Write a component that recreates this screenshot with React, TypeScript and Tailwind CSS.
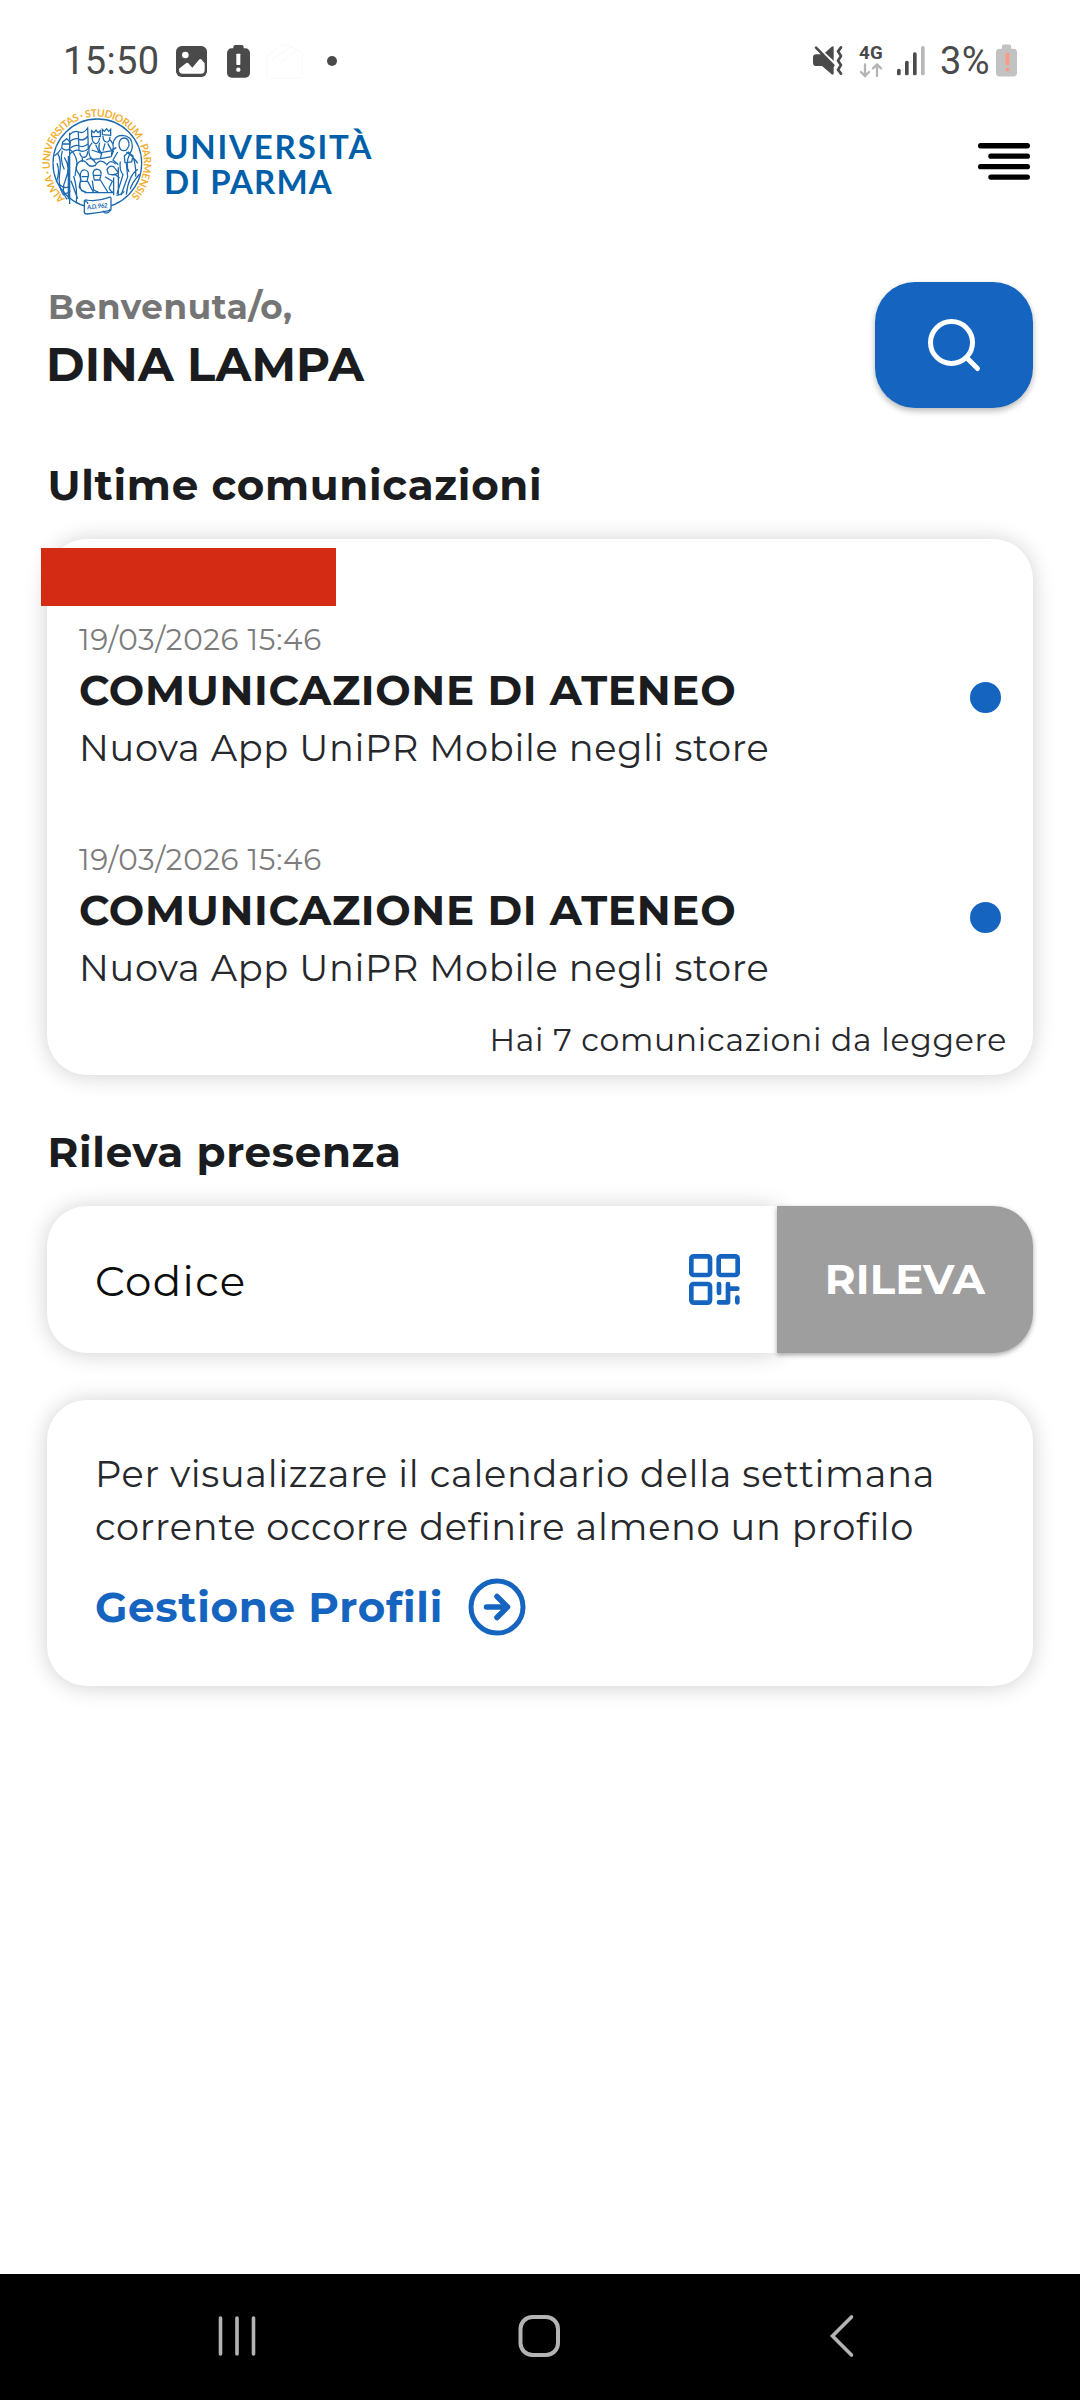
import type { ReactNode } from 'react';

const comunicazioni = [
  { id: 1, date: '19/03/2026 15:46', title: 'COMUNICAZIONE DI ATENEO', text: 'Nuova App UniPR Mobile negli store' },
  { id: 2, date: '19/03/2026 15:46', title: 'COMUNICAZIONE DI ATENEO', text: 'Nuova App UniPR Mobile negli store' },
];

function StatusBar() {
  return (
    <div className="flex h-[100px] shrink-0 items-center justify-between pt-[22px] pr-[63px] pl-[63px] font-[Roboto,sans-serif] text-[38px] leading-none text-[#4a4a4a]">
      <div className="flex items-center">
        <span className="w-[95px] pb-px tracking-[0.4px]">15:50</span>
        <svg className="ml-[18px] h-9 w-[31px]" viewBox="438 69 93 108">
          <rect x="438" y="78" width="93" height="93" rx="17" fill="currentColor" />
          <circle cx="466" cy="105" r="10" fill="#fff" />
          <path d="M447 146l22-17q3-2 6 1l12 13 20-24q4-4 8 0l9 11v20q0 11-11 11h-55q-11 0-11-11z" fill="#fff" />
        </svg>
        <svg className="ml-5 h-9 w-[23px]" viewBox="591 69 69 108">
          <rect x="610" y="75" width="31" height="20" rx="6" fill="currentColor" />
          <rect x="591" y="85" width="69" height="88" rx="14" fill="currentColor" />
          <rect x="619" y="101" width="12" height="34" rx="2" fill="#fff" />
          <circle cx="625" cy="149" r="6.5" fill="#fff" />
        </svg>
        <svg className="ml-4 h-9 w-[37px]" viewBox="708 69 111 108" fill="none" stroke="#eff4fb" strokeWidth="2">
          <path d="M710 108l47-33q8-4 17 0l36 20q8 5 8 13v50q0 17-17 17h-74q-17 0-17-17z" />
          <path d="M726 118l58-38M756 124l44-32" />
        </svg>
        <span className="ml-6 size-2.5 rounded-full bg-[#4a4a4a]" />
      </div>

      <div className="flex items-center">
        <svg className="h-9 w-[31px]" viewBox="96 69 93 108">
          <path d="M99 113q0-10 10-10h17l35 35v22q0 7-6 3l-29-25h-17q-10 0-10-10z" fill="currentColor" />
          <path d="M161 83v39l-26-24 19-17q7-5 7 2z" fill="currentColor" />
          <path d="M108 83l52 53" stroke="currentColor" strokeWidth="8" strokeLinecap="round" />
          <path
            d="M183 82l-9 12 9 14-9 14 9 13-9 14 9 12"
            fill="none"
            stroke="currentColor"
            strokeWidth="8"
            strokeLinecap="round"
            strokeLinejoin="round"
          />
        </svg>
        <svg className="ml-[15px] h-9 w-[26px]" viewBox="235 69 78 108">
          <text x="238" y="118" fontSize="56" fontWeight="700" fill="currentColor" textLength="72">
            4G
          </text>
          <path
            d="M256 133v34M244 156l12 12 12-12M292 168v-34M280 145l12-12 12 12"
            fill="none"
            stroke="#b4b4b4"
            strokeWidth="7"
            strokeLinecap="round"
          />
        </svg>
        <svg className="ml-[13px] h-9 w-7" viewBox="352 69 84 108" fill="currentColor">
          <rect x="352" y="146" width="11" height="20" rx="5" />
          <rect x="376" y="122" width="11" height="44" rx="5" />
          <rect x="400" y="97" width="11" height="69" rx="5" />
          <rect x="424" y="78" width="11" height="88" rx="5" fill="#b9b9b9" />
        </svg>
        <span className="ml-[15px] w-[51px] pb-px tracking-[0.5px]">3%</span>
        <svg className="ml-[5px] h-9 w-[21px]" viewBox="648 69 64 108" fill="#c2c2c2">
          <rect x="666" y="73" width="28" height="20" rx="5" />
          <rect x="648" y="86" width="64" height="84" rx="11" />
          <rect x="677" y="98" width="12" height="38" rx="3" fill="#f89c86" />
          <circle cx="683" cy="149" r="6.5" fill="#f89c86" />
        </svg>
      </div>
    </div>
  );
}

function Seal() {
  return (
    <svg className="mt-1 h-[114px] w-[118px]" viewBox="0 0 354 342" fill="none" stroke="#1a68ae" strokeWidth="3.800">
      <path id="motto" d="M79 284A141 141 0 1 1 272 280" stroke="none" />
      <text fontFamily="Lato, sans-serif" fontSize="31" fontWeight="700" fill="#f2ae30" stroke="none">
        <textPath href="#motto" textLength="668">
          ALMA · UNIVERSITAS · STUDIORUM · PARMENSIS
        </textPath>
      </text>
      <circle cx="175" cy="178" r="133" />
      {/* left figure, mitre and cloak */}
      <path d="M68 132l3-18 12-10 11 11-3 20q-9 8-23-3zM68 120h24M66 134q-6 12-20 22M56 148q12 20 6 60t12 66M70 140q-8 30 6 56M92 136q18 12 22 40l-6 40M76 160q20 30 4 66t4 60M54 178q10 24-2 56M88 156v130" />
      <path d="M92 86v214M62 242q16 14 26 6M96 230l20 54M104 216q12 40 8 82" />
      {/* banner */}
      <path d="M92 92q14-14 28-8t26-12l2 62q-14 12-26 6t-30 10M93 112q14-12 28-6t26-10M118 84l2 58M94 132q14-12 28-6t26-8M122 146q4 16 14 14t10-18M130 162v12" />
      {/* crowned pair */}
      <path d="M158 98v-18l7 6 6-8 6 8 7-6v18zM190 92v-16l6 6 7-8 6 8 6-6v18zM160 98q-2 16 8 20t14-16M192 96q0 16 10 18t11-16M160 116q-18 18-6 44l12 10M182 116q-6 18 4 30l34-6q8-16-6-32M158 138l30 10-4 16-24 2M186 164l30-6 8-18M170 122l10 22M198 118l-6 22M206 118l12 22" />
      {/* right figure with halo */}
      <path d="M222 120q4-26 28-26 30 2 30 32 0 14-8 22M240 120q2-18 16-18t14 22q-6 18-18 16t-12-20zM232 130q-16 8-14 24M236 144l-14 24 16 14M262 144q20 12 34 34M272 150q-14 30-2 54M282 158q10 30 8 60M256 156l12-12 14 12-4 18-20 2zM244 172q-4 26 8 40l-18 58M262 178l4 40-20 56M296 196q-28 20-34 76M302 210q-26 30-28 46" />
      {/* crowd */}
      <path d="M118 176q-14 16 2 34 8 14 2 30t18 24M118 176q12-12 24 0 10 16 26 8M168 186q14-26 34-6M142 168q18-12 28 10M202 184q12-20 28-4M124 212q2-16 14-14t10 18l-4 16h-18zM128 218h18M124 234q-4 14 4 26l16 6M146 232l18 34M162 208q2-14 14-12t10 16l-4 16h-16zM164 214h20M160 230l4 28 16 8M184 228l22 36M136 266h86M204 196q8-14 20-8l14 18q-14 10-30 4zM198 218l22 14-10 20M224 220v54M238 190v82M210 252q6 12 14 14M226 210l16 12" />
      <path d="M94 262q-10 8-16 6M232 274q16-2 24-12" />
      {/* scroll */}
      <path d="M136 294q-2-6 6-6 32 6 68-8 6-2 6 4v30q0 6-6 6-36 8-66 10-8 0-8-6z" fill="#fff" />
      <path d="M192 320q4 10 14 6t6-12M138 292q10 2 8 8" />
      <text
        x="144"
        y="313"
        fontFamily="Lato, sans-serif"
        fontSize="19"
        fontStyle="italic"
        fontWeight="700"
        fill="#1a68ae"
        stroke="none"
        transform="rotate(-6 175 306)"
        textLength="62"
      >
        A.D. 962
      </text>
    </svg>
  );
}

function Header() {
  return (
    <header className="flex h-[120px] shrink-0 items-start justify-between pr-[50px] pl-[39px]">
      <div className="flex items-start">
        <Seal />
        <div className="mt-[29px] ml-[7px] font-[Lato,sans-serif] text-[33px] leading-[35px] font-bold text-[#005fa8]">
          <p className="tracking-[1.8px]">UNIVERSITÀ</p>
          <p className="tracking-[1.1px]">DI PARMA</p>
        </div>
      </div>
      <svg
        className="mt-[43px] h-[37px] w-[52px]"
        viewBox="593 369 157 111"
        stroke="#000"
        strokeWidth="16"
        strokeLinecap="round"
      >
        <path d="M601 377h141M632 408.500h110M601 440h141M632 471.500h110" />
      </svg>
    </header>
  );
}

function Card({ children, className }: { children: ReactNode; className: string }) {
  return <div className={`bg-white shadow-[0_1px_22px_rgba(0,0,0,0.19)] ${className}`}>{children}</div>;
}

function SectionTitle({ children }: { children: ReactNode }) {
  return <h2 className="mt-[51px] mb-7 pl-[0.5px] text-[42px] leading-[52px] font-bold">{children}</h2>;
}

function NavBar() {
  return (
    <nav className="mt-auto flex h-[126px] shrink-0 items-center bg-black pb-[2px]">
      <svg className="ml-[217px] h-11 w-10" viewBox="0 0 40 44" stroke="#b3b3b3" strokeWidth="3.600" strokeLinecap="round">
        <path d="M3.500 4v36M20 4v36M36.500 4v36" />
      </svg>
      <svg className="ml-[260px] size-11" viewBox="0 0 44 44" fill="none" stroke="#b3b3b3" strokeWidth="4">
        <rect x="3.500" y="3" width="37.500" height="38" rx="12" />
      </svg>
      <svg className="ml-[267px] h-11 w-7" viewBox="0 0 28 44" fill="none" stroke="#b3b3b3" strokeWidth="3.600" strokeLinecap="round">
        <path d="M23.500 3L4.500 22l19 19" />
      </svg>
    </nav>
  );
}

export default function App() {
  return (
    <div className="flex h-[2400px] w-[1080px] flex-col bg-white font-[Montserrat,Inter,sans-serif] tracking-[0.68px] text-[#1a1c20]">
      <StatusBar />
      <Header />

      <main className="flex flex-col px-[47px] pt-[62px]">
        <section className="flex h-[126px] justify-between">
          <div className="pt-[3px]">
            <p className="pl-px text-[34.1px] leading-[44px] font-bold text-[#757575]">Benvenuta/o,</p>
            <h1 className="-ml-px mt-[7px] text-[46.7px] leading-[58px] font-bold tracking-[0.1px]">DINA LAMPA</h1>
          </div>
          <button className="flex w-[158px] items-center justify-center rounded-[40px] bg-[#1565c0] shadow-[0_3px_6px_rgba(0,0,0,0.28)]">
            <svg className="size-[60px]" viewBox="0 0 60 60" fill="none" stroke="#fff" strokeWidth="5" strokeLinecap="round">
              <circle cx="27.500" cy="27.500" r="21" />
              <path d="M43 43l10.500 10.500" />
            </svg>
          </button>
        </section>

        <SectionTitle>Ultime comunicazioni</SectionTitle>
        <Card className="relative h-[536px] rounded-[40px] pt-[83px] pr-8 pl-8">
          <div className="absolute top-[9px] -left-1.5 h-[58px] w-[295px] bg-[#d42b14]" />
          <div className="flex flex-col gap-[71.5px]">
            {comunicazioni.map((c) => (
              <div key={c.id} className="flex items-center justify-between">
                <div>
                  <p className="text-[29.4px] leading-9 text-[#7c7c7c]">{c.date}</p>
                  <p className="mt-[7px] text-[42px] leading-[50px] font-bold">{c.title}</p>
                  <p className="mt-[9.5px] text-[36.75px] leading-[46px] text-[#26282c]">{c.text}</p>
                </div>
                <span className="mt-[3px] size-[31px] rounded-full bg-[#1565c0]" />
              </div>
            ))}
          </div>
          <p className="mt-[31px] -mr-[6px] text-right text-[31.5px] leading-9 text-[#26282c]">
            Hai 7 comunicazioni da leggere
          </p>
        </Card>

        <SectionTitle>Rileva presenza</SectionTitle>
        <div className="flex h-[147px]">
          <Card className="flex flex-1 items-center justify-between rounded-l-[40px] pr-[35px] pl-12">
            <span className="pt-1 text-[42px] tracking-[1.3px] text-[#0c0c0c]">Codice</span>
            <svg
              className="h-[55px] w-[55px]"
              viewBox="80 217 165 165"
              fill="none"
              stroke="#1565c0"
              strokeWidth="14"
              strokeLinecap="round"
              strokeLinejoin="round"
            >
              <rect x="93" y="230" width="56" height="56" rx="7" />
              <rect x="175" y="230" width="57" height="56" rx="7" />
              <rect x="93" y="313" width="56" height="56" rx="7" />
              <path d="M176 313v27M203 313v55h-27M203 327h28M231 354v14" />
            </svg>
          </Card>
          <button className="relative w-64 rounded-r-[40px] bg-[#9e9e9e] text-[42px] font-bold tracking-[0.1px] text-white shadow-[0_2px_5px_rgba(0,0,0,0.35)]">
            RILEVA
          </button>
        </div>

        <Card className="mt-[47px] h-[286px] rounded-[40px] px-12 pt-[47px]">
          <p className="text-[36.75px] leading-[53px] text-[#26282c]">
            Per visualizzare il calendario della settimana
            <br />
            corrente occorre definire almeno un profilo
          </p>
          <a className="mt-6 flex items-center text-[#1565c0]">
            <span className="text-[42px] leading-[58px] font-bold">Gestione Profili</span>
            <svg
              className="mt-px ml-[25px] size-[58px]"
              viewBox="0 0 58 58"
              fill="none"
              stroke="currentColor"
              strokeWidth="5.500"
              strokeLinecap="round"
              strokeLinejoin="round"
            >
              <circle cx="29" cy="29" r="26" strokeWidth="5" />
              <path d="M18.500 29h21M29 18.500L39.500 29 29 39.500" />
            </svg>
          </a>
        </Card>
      </main>

      <NavBar />
    </div>
  );
}
